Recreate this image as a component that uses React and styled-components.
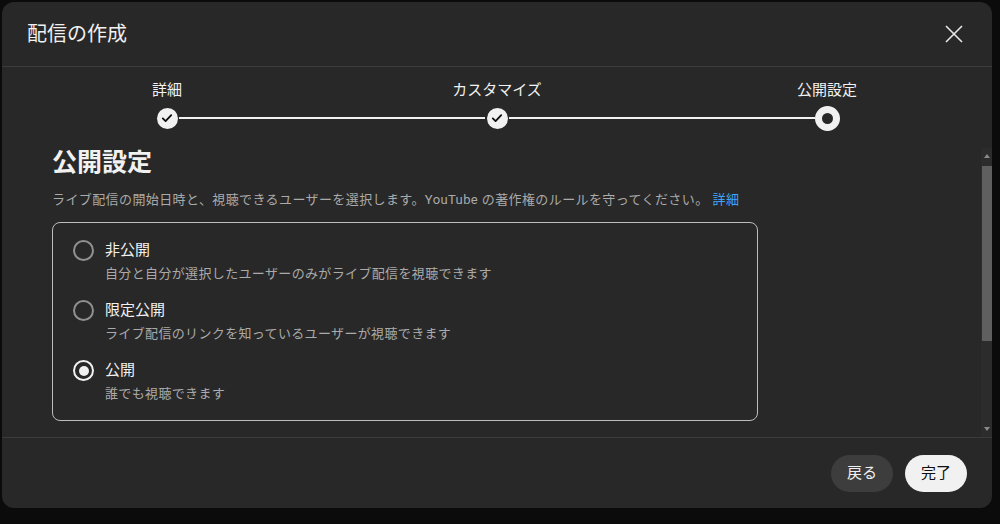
import React from "react";
import styled, { createGlobalStyle } from "styled-components";

const Global = createGlobalStyle`
  html, body { margin: 0; padding: 0; background: #0b0b0b; }
  body {
    font-family: Roboto, "Noto Sans CJK JP", "Noto Sans", sans-serif;
    color: #f1f1f1;
    width: 1000px;
    height: 524px;
    overflow: hidden;
  }
  * { box-sizing: border-box; }
`;

const Page = styled.div`
  padding: 2px 8px 16px 2px;
`;

const Dialog = styled.div`
  width: 990px;
  height: 506px;
  background: #282828;
  border-radius: 12px;
  display: flex;
  flex-direction: column;
  overflow: hidden;
`;

const Header = styled.header`
  height: 65px;
  flex: none;
  display: flex;
  align-items: center;
  justify-content: space-between;
  padding: 0 18px 1px 25px;
  border-bottom: 1px solid #3b3b3b;
`;

const Title = styled.h1`
  margin: 0;
  font-size: 20px;
  font-weight: 400;
  line-height: 28px;
  color: #f1f1f1;
`;

const CloseButton = styled.button`
  width: 40px;
  height: 40px;
  border: none;
  background: transparent;
  padding: 0;
  display: flex;
  align-items: center;
  justify-content: center;
  cursor: pointer;
`;

const Stepper = styled.nav`
  flex: none;
  display: flex;
  flex-direction: column;
  align-items: center;
  padding: 13px 0 18px;
  gap: 6px;
`;

const Labels = styled.div`
  width: 804px;
  display: flex;
  justify-content: space-between;
`;

const StepLabel = styled.div`
  width: 144px;
  text-align: center;
  font-size: 15px;
  line-height: 20px;
  color: #f1f1f1;
`;

const Track = styled.div`
  width: 684px;
  height: 24px;
  display: flex;
  align-items: center;
`;

const Slot = styled.div`
  width: 24px;
  height: 24px;
  flex: none;
  display: flex;
  align-items: center;
  justify-content: center;
`;

const DoneDot = styled.div`
  width: 21px;
  height: 21px;
  border-radius: 50%;
  background: #f1f1f1;
  display: flex;
  align-items: center;
  justify-content: center;
`;

const CurrentDot = styled.div`
  width: 25px;
  height: 25px;
  border-radius: 50%;
  border: 7px solid #f1f1f1;
  background: #282828;
  flex: none;
`;

const Line = styled.div`
  flex: 1;
  height: 2px;
  background: #f1f1f1;
`;

const Body = styled.div`
  height: 290px;
  flex: none;
  display: flex;
  border-bottom: 1px solid #3b3b3b;
`;

const Content = styled.section`
  flex: 1;
  padding: 0 0 0 50px;
  overflow: hidden;
`;

const Heading = styled.h2`
  margin: 0;
  font-size: 25px;
  line-height: 30px;
  font-weight: 700;
  color: #f1f1f1;
`;

const Description = styled.p`
  margin: 12px 0 12px;
  font-size: 13px;
  line-height: 20px;
  letter-spacing: 0.4px;
  color: #aaaaaa;
`;

const Link = styled.a`
  color: #3ea6ff;
  text-decoration: none;
  margin-left: 4px;
`;

const OptionBox = styled.div`
  width: 706px;
  border: 1px solid #bdbdbd;
  border-radius: 8px;
  padding: 16px 20px;
  display: flex;
  flex-direction: column;
  gap: 15px;
`;

const Option = styled.label`
  display: flex;
  align-items: flex-start;
  gap: 11px;
  cursor: pointer;
`;

const Radio = styled.span`
  width: 21px;
  height: 21px;
  margin-top: 1px;
  border-radius: 50%;
  flex: none;
  border: 2px solid ${(p) => (p.$checked ? "#f1f1f1" : "#909090")};
  display: flex;
  align-items: center;
  justify-content: center;
  &::after {
    content: "";
    width: 10px;
    height: 10px;
    border-radius: 50%;
    background: ${(p) => (p.$checked ? "#f1f1f1" : "transparent")};
  }
`;

const OptionText = styled.div`
  display: flex;
  flex-direction: column;
  gap: 3px;
`;

const OptionTitle = styled.div`
  font-size: 15px;
  line-height: 22px;
  color: #f1f1f1;
`;

const OptionSub = styled.div`
  font-size: 13px;
  line-height: 20px;
  letter-spacing: 0.35px;
  color: #aaaaaa;
`;

const ScrollTrack = styled.div`
  width: 11px;
  flex: none;
  background: #2c2c2c;
  display: flex;
  flex-direction: column;
  align-items: center;
`;

const Arrow = styled.div`
  height: 16px;
  flex: none;
  display: flex;
  align-items: center;
  justify-content: center;
`;

const Thumb = styled.div`
  width: 10px;
  height: 175px;
  margin-top: 2px;
  background: #5f5f5f;
  flex: none;
`;

const Spacer = styled.div`
  flex: 1;
`;

const Footer = styled.footer`
  flex: 1;
  display: flex;
  align-items: center;
  justify-content: flex-end;
  gap: 12px;
  padding: 0 25px 0 0;
`;

const Pill = styled.button`
  height: 37px;
  width: 62px;
  border-radius: 19px;
  border: none;
  font-family: inherit;
  font-size: 15px;
  line-height: 20px;
  background: ${(p) => (p.$primary ? "#f1f1f1" : "#3d3d3d")};
  color: ${(p) => (p.$primary ? "#0f0f0f" : "#f1f1f1")};
  cursor: pointer;
`;

const Check = () => (
  <svg width="14" height="14" viewBox="0 0 14 14">
    <path d="M2.8 7.4 L5.6 10.1 L11.2 4.2" fill="none" stroke="#0f0f0f" strokeWidth="1.8" strokeLinecap="round" strokeLinejoin="round" />
  </svg>
);

const Close = () => (
  <svg width="24" height="24" viewBox="0 0 24 24">
    <path d="M4 4 L20 20 M20 4 L4 20" stroke="#e8e8e8" strokeWidth="1.6" fill="none" />
  </svg>
);

const Tri = ({ down }) => (
  <svg width="6" height="4" viewBox="0 0 6 4">
    <path d={down ? "M0 0 L6 0 L3 4 Z" : "M0 4 L6 4 L3 0 Z"} fill="#8a8a8a" />
  </svg>
);

const options = [
  { title: "非公開", sub: "自分と自分が選択したユーザーのみがライブ配信を視聴できます", checked: false },
  { title: "限定公開", sub: "ライブ配信のリンクを知っているユーザーが視聴できます", checked: false },
  { title: "公開", sub: "誰でも視聴できます", checked: true },
];

export default function App() {
  return (
    <Page>
      <Global />
      <Dialog>
        <Header>
          <Title>配信の作成</Title>
          <CloseButton aria-label="閉じる">
            <Close />
          </CloseButton>
        </Header>
        <Stepper>
          <Labels>
            <StepLabel>詳細</StepLabel>
            <StepLabel>カスタマイズ</StepLabel>
            <StepLabel>公開設定</StepLabel>
          </Labels>
          <Track>
            <Slot><DoneDot><Check /></DoneDot></Slot>
            <Line />
            <Slot><DoneDot><Check /></DoneDot></Slot>
            <Line />
            <Slot><CurrentDot /></Slot>
          </Track>
        </Stepper>
        <Body>
          <Content>
            <Heading>公開設定</Heading>
            <Description>
              ライブ配信の開始日時と、視聴できるユーザーを選択します。YouTube の著作権のルールを守ってください。
              <Link href="#">詳細</Link>
            </Description>
            <OptionBox>
              {options.map((o) => (
                <Option key={o.title}>
                  <Radio $checked={o.checked} />
                  <OptionText>
                    <OptionTitle>{o.title}</OptionTitle>
                    <OptionSub>{o.sub}</OptionSub>
                  </OptionText>
                </Option>
              ))}
            </OptionBox>
          </Content>
          <ScrollTrack>
            <Arrow><Tri /></Arrow>
            <Thumb />
            <Spacer />
            <Arrow><Tri down /></Arrow>
          </ScrollTrack>
        </Body>
        <Footer>
          <Pill>戻る</Pill>
          <Pill $primary>完了</Pill>
        </Footer>
      </Dialog>
    </Page>
  );
}
